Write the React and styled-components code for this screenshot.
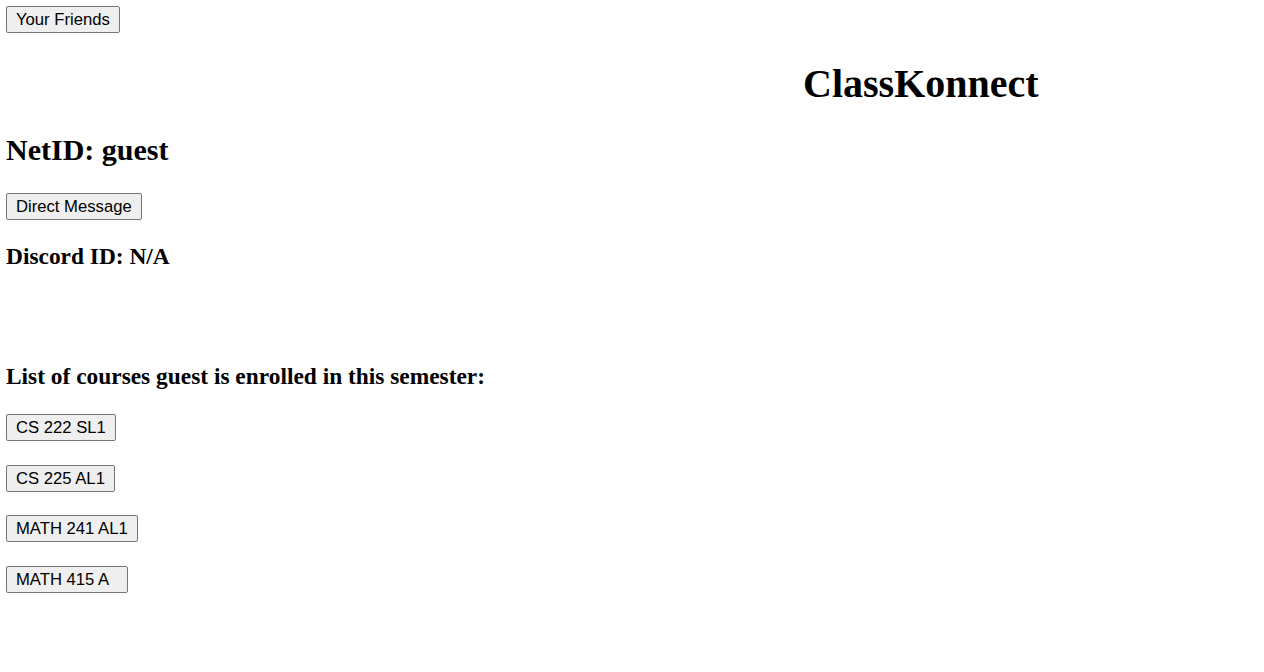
import React from 'react';
import styled, { createGlobalStyle } from 'styled-components';

const courses = [
  { code: 'CS 222 SL1' },
  { code: 'CS 225 AL1' },
  { code: 'MATH 241 AL1' },
  { code: 'MATH 415 A', padded: true },
];

const GlobalStyle = createGlobalStyle`
  html, body {
    margin: 0;
    padding: 0;
    background: #ffffff;
  }
  body {
    font-family: "Liberation Serif", "Times New Roman", serif;
    color: #000000;
  }
`;

const Page = styled.div`
  display: flex;
  flex-direction: column;
  align-items: flex-start;
  padding: 6px;
`;

const Button = styled.button`
  box-sizing: border-box;
  height: 27px;
  margin: ${(p) => p.$top || 0}px 0 0 0;
  padding: 0 ${(p) => (p.$padded ? 18 : 9)}px 0 9px;
  font-family: "Liberation Sans", Arial, sans-serif;
  font-size: 16.67px;
  line-height: 25px;
  color: #000000;
  background: #efefef;
  border: 1px solid #767676;
  border-radius: 2px;
  cursor: pointer;
  white-space: nowrap;

  &:hover {
    background: #e5e5e5;
  }
`;

const Title = styled.h1`
  align-self: stretch;
  margin: 28px 0 0 0;
  padding-left: 797px;
  font-size: 40px;
  line-height: 46px;
  font-weight: 700;
`;

const NetId = styled.h2`
  margin: 25px 0 0 0;
  font-size: 30px;
  line-height: 35px;
  font-weight: 700;
`;

const SubHeading = styled.h3`
  margin: ${(p) => p.$top}px 0 0 0;
  font-size: 23.4px;
  line-height: 27px;
  font-weight: 700;
`;

const CourseList = styled.div`
  display: flex;
  flex-direction: column;
  align-items: flex-start;
  gap: 23.6px;
  margin-top: 24px;
`;

const App = () => {
  const netId = 'guest';

  return (
    <>
      <GlobalStyle />
      <Page>
        <Button>Your Friends</Button>
        <Title>ClassKonnect</Title>
        <NetId>NetID: {netId}</NetId>
        <Button $top={26}>Direct Message</Button>
        <SubHeading $top={22.6}>Discord ID: N/A</SubHeading>
        <SubHeading $top={93.7}>
          List of courses {netId} is enrolled in this semester:
        </SubHeading>
        <CourseList>
          {courses.map((c) => (
            <Button key={c.code} $padded={c.padded}>
              {c.code}
            </Button>
          ))}
        </CourseList>
      </Page>
    </>
  );
};

export default App;
